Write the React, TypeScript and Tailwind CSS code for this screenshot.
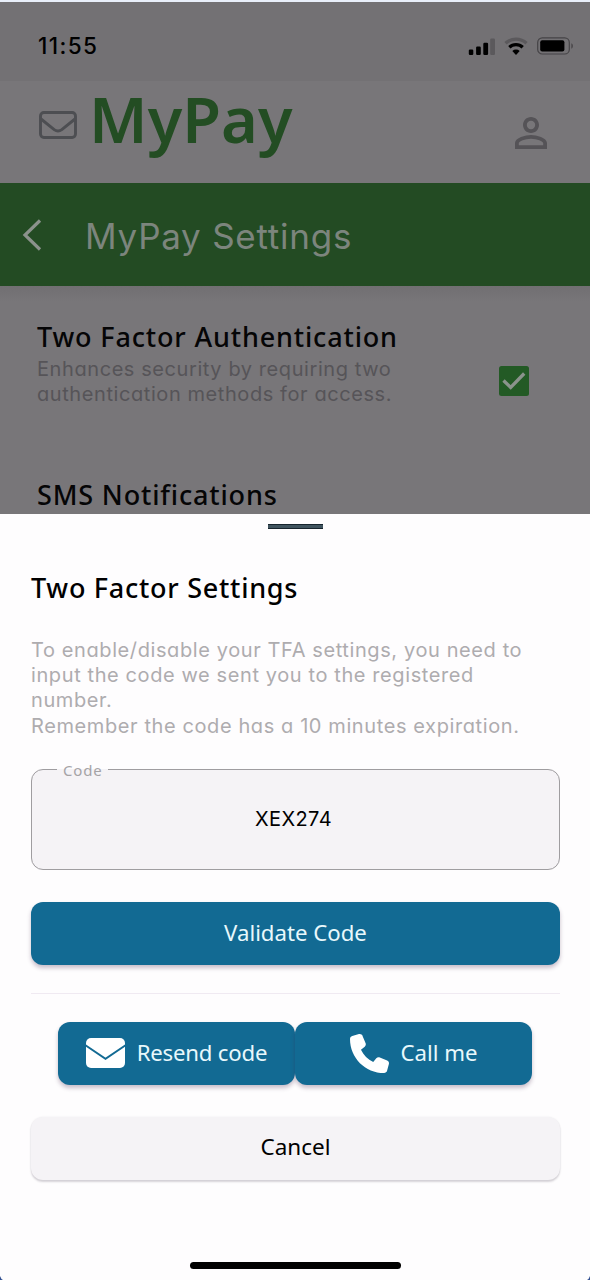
import { ReactNode } from "react"
import { FaPhone } from "react-icons/fa6"
import { MdPersonOutline } from "react-icons/md"

const settings = [
  {
    title: "Two Factor Authentication",
    lines: ["Enhances security by requiring two", "authentication methods for access."],
    enabled: true,
  },
  { title: "SMS Notifications", lines: [], enabled: false },
]

const instructions = [
  "To enable/disable your TFA settings, you need to",
  "input the code we sent you to the registered",
  "number.",
  "Remember the code has a 10 minutes expiration.",
]

function StatusBar() {
  return (
    <div className="flex h-[79px] items-start justify-between bg-[#737174] pt-[30px] pr-4 pl-[38px]">
      <span className="font-['Inter',sans-serif] text-[22.5px] leading-7 font-medium tracking-[1.4px] text-black">11:55</span>
      <div className="flex items-center gap-[9px] pt-[5px]">
        <svg width="27" height="18" viewBox="0 0 27 18">
          <rect x="0.8" y="12.5" width="4.5" height="5.5" rx="1.2" />
          <rect x="8.1" y="9.5" width="4.7" height="8.5" rx="1.2" />
          <rect x="15.3" y="5.8" width="4.8" height="12.2" rx="1.2" />
          <rect x="22.2" y="1.5" width="4.8" height="16.5" rx="1.2" fill="#5b595c" />
        </svg>
        <svg width="24" height="18" viewBox="0 0 24 18" fill="none">
          <path d="M1.5 6.3a15.4 15.4 0 0 1 21 0" stroke="#5b595c" strokeWidth="3.3" />
          <path d="M5.3 10.3a9.7 9.7 0 0 1 13.4 0" stroke="#000" strokeWidth="3.3" />
          <path d="M8.3 14a5.4 5.4 0 0 1 7.4 0L12 18z" fill="#000" />
        </svg>
        <svg width="37" height="18" viewBox="0 0 37 18" fill="none">
          <rect x="0.7" y="0.8" width="31.6" height="16.2" rx="4.6" stroke="#454346" strokeWidth="1.2" />
          <rect x="3.2" y="3.2" width="24.2" height="11.4" rx="2" fill="#000" />
          <path d="M34.4 6.3c1.9.6 1.9 4.8 0 5.4z" fill="#454346" />
        </svg>
      </div>
    </div>
  )
}

function MailOutlineIcon() {
  return (
    <svg className="mt-[30px]" width="38" height="28" viewBox="0 0 38 28" fill="none" stroke="#4d4e52" strokeWidth="2.9">
      <rect x="1.5" y="1.5" width="35" height="25" rx="3.4" />
      <path d="m2 8 13.200 10.600q3.800 2.600 7.600 0L36 8" />
    </svg>
  )
}

function MailIcon() {
  return (
    <svg className="mt-0.5" width="39" height="30" viewBox="0 0 39 30" fill="none">
      <rect width="39" height="30" rx="5" fill="#fff" />
      <path d="m-1 7 20.500 13.800L40 7" stroke="#126a93" strokeWidth="1.9" />
    </svg>
  )
}

function Header() {
  return (
    <header className="flex h-[102px] justify-between bg-[#787679] pr-[35px] pl-[39px]">
      <div className="flex">
        <MailOutlineIcon />
        <h1 className="ml-3 font-['Noto_Sans',sans-serif] text-[63px] leading-[76px] font-semibold tracking-[0.1px] text-[#234d23]">
          MyPay
        </h1>
      </div>
      <MdPersonOutline className="mt-7 size-12 text-[#555357]" />
    </header>
  )
}

function TitleBar() {
  return (
    <div className="flex h-[103px] items-center bg-[#234b23] pl-[22px]">
      <svg width="20" height="32" viewBox="0 0 20 32" fill="none" stroke="#8b928c" strokeWidth="3.2">
        <path d="M18 1.5 3 16l15 14.5" />
      </svg>
      <h2 className="mt-0.5 ml-[43px] font-['Inter',sans-serif] text-[35px] leading-10 tracking-[0.75px] text-[#7c857d]">MyPay Settings</h2>
    </div>
  )
}

function Checkbox() {
  return (
    <svg width="30" height="30" viewBox="0 0 30 30" fill="none">
      <rect width="30" height="30" rx="2.5" fill="#235a25" />
      <path d="m4.5 14.500 7.200 7L25.200 7.500" stroke="#8b938c" strokeWidth="3.3" />
    </svg>
  )
}

function Button({ className = "", children }: { className?: string; children: ReactNode }) {
  return (
    <button
      className={`flex h-[63px] items-center justify-center rounded-xl bg-[#126a93] pb-0.5 font-['Noto_Sans',sans-serif] text-[22.2px] text-[#e8f8fc] shadow-[0_3px_4px_rgba(60,30,70,0.28)] ${className}`}
    >
      {children}
    </button>
  )
}

function TwoFactorSheet() {
  return (
    <section className="relative flex h-[766px] flex-col overflow-hidden bg-[#fefdfe] pr-[30px] pl-[31px]">
      <div className="mt-2.5 ml-[237px] h-[5px] w-[55px] border-y border-[#17252e] bg-[#40545f]" />
      <h2 className="mt-[41px] font-['Noto_Sans',sans-serif] text-[27px] leading-9 font-medium tracking-[0.73px] text-black">
        Two Factor Settings
      </h2>
      <p className="mt-[32px] font-['Inter',sans-serif] text-[20px] leading-[25.2px] tracking-[0.6px] whitespace-nowrap text-[#aeacaf] [font-feature-settings:'cv11']">
        {instructions.map((line) => (
          <span key={line} className="block">{line}</span>
        ))}
      </p>

      <fieldset className="mt-[21px] h-[110px] rounded-xl border-[1.5px] border-[#9f9da0] bg-[#f5f3f6] pl-[25px]">
        <legend className="px-1.5 font-['Noto_Sans',sans-serif] text-[15px] leading-5 tracking-[0.8px] text-[#a5a3a6]">Code</legend>
        <input
          defaultValue="XEX274"
          aria-label="Code"
          className="h-[78px] w-full bg-transparent pr-[29px] text-center font-['Inter',sans-serif] text-[20px] tracking-[0.4px] text-black outline-none"
        />
      </fieldset>

      <Button className="mt-8">Validate Code</Button>
      <hr className="mt-7 border-[#f0eaf2]" />
      <div className="mt-7 mr-7 ml-[27px] grid grid-cols-2">
        <Button className="gap-3 tracking-[-0.2px]">
          <MailIcon />
          Resend code
        </Button>
        <Button className="gap-3">
          <FaPhone className="mt-0.5 size-[39px] text-white" />
          Call me
        </Button>
      </div>
      <button className="mt-8 flex h-[63px] items-center justify-center rounded-xl bg-[#f5f3f6] pb-0.5 font-['Noto_Sans',sans-serif] text-[22.5px] text-black shadow-[0_2px_2px_rgba(40,30,50,0.18),0_0_2px_rgba(40,30,50,0.08)]">
        Cancel
      </button>
      <div className="mt-[82px] ml-[159px] h-[7px] w-[211px] rounded-full bg-black" />

      {/* device corners */}
      <svg className="absolute bottom-0 left-0" width="3" height="4" fill="#314f91">
        <path d="M0 0Q1 3 3 4H0z" />
      </svg>
      <svg className="absolute right-0 bottom-0" width="3" height="4" fill="#314f91">
        <path d="M3 0Q2 3 0 4h3z" />
      </svg>
    </section>
  )
}

export default function App() {
  return (
    <main className="flex h-[1280px] w-[590px] flex-col overflow-hidden bg-[#787679]">
      <div className="h-0.5 shrink-0 bg-[#e9effa]" />
      <StatusBar />
      <Header />
      <TitleBar />
      <div className="h-[228px] bg-linear-to-b from-[#716f72] to-[#787679] to-[16px] pt-[33px] pl-[37px]">
        {settings.map((item) => (
          <div key={item.title} className="flex h-[158px] items-start justify-between pr-[61px]">
            <div className="whitespace-nowrap">
              <h3 className="font-['Noto_Sans',sans-serif] text-[27px] leading-9 font-medium tracking-[0.84px] text-[#050506]">{item.title}</h3>
              <p className="mt-0.5 font-['Inter',sans-serif] text-[20px] leading-[25px] tracking-[0.58px] text-[#565458] [font-feature-settings:'cv11']">
                {item.lines.map((line) => (
                  <span key={line} className="block">{line}</span>
                ))}
              </p>
            </div>
            {item.enabled && (
              <div className="mt-[47px]">
                <Checkbox />
              </div>
            )}
          </div>
        ))}
      </div>
      <TwoFactorSheet />
    </main>
  )
}
